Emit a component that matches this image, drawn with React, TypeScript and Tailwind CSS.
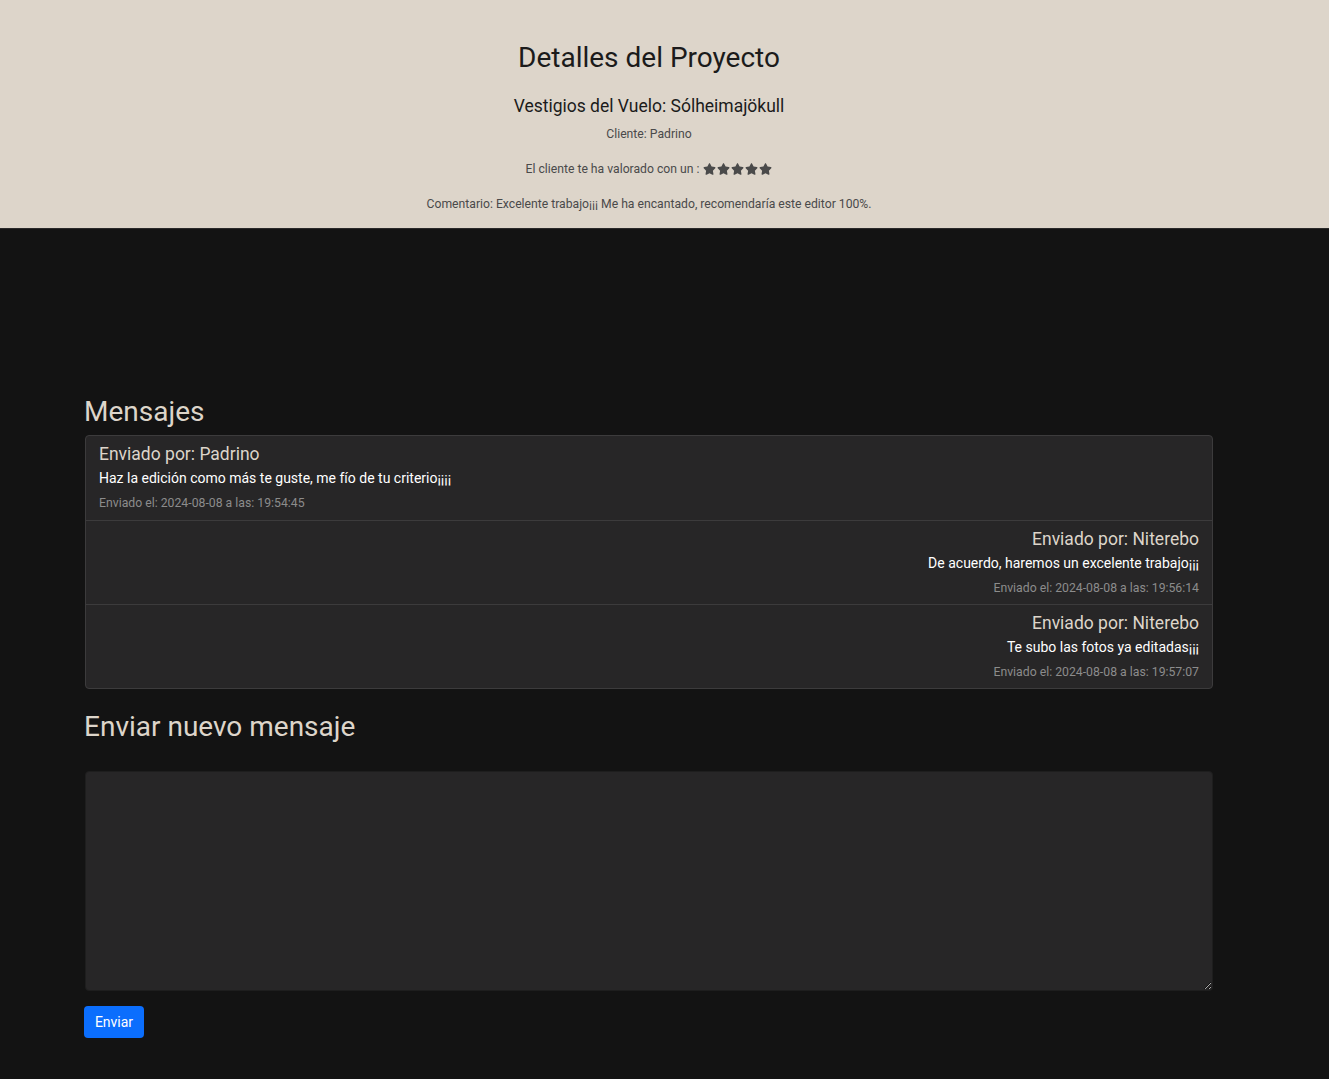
import { useState } from "react";

const messages = [
  {
    from: "Padrino",
    text: "Haz la edición como más te guste, me fío de tu criterio¡¡¡¡",
    date: "2024-08-08",
    time: "19:54:45",
    mine: false,
  },
  {
    from: "Niterebo",
    text: "De acuerdo, haremos un excelente trabajo¡¡¡",
    date: "2024-08-08",
    time: "19:56:14",
    mine: true,
  },
  {
    from: "Niterebo",
    text: "Te subo las fotos ya editadas¡¡¡",
    date: "2024-08-08",
    time: "19:57:07",
    mine: true,
  },
];

function Star() {
  return (
    <svg viewBox="0 0 576 512" className="w-[13px] h-[12px] fill-[#4a4a4a]">
      <path d="M316.9 18C311.6 7 300.4 0 288.1 0s-23.4 7-28.8 18L195 150.3 51.4 171.5c-12 1.8-22 10.2-25.7 21.7s-.7 24.2 7.9 32.7L137.8 329 113.2 474.7c-2 12 3 24.2 12.9 31.3s23 8 33.8 2.3l128.3-68.5 128.3 68.5c10.8 5.7 23.9 4.9 33.8-2.3s14.9-19.3 12.9-31.3L438.5 329 542.7 225.9c8.6-8.5 11.7-21.2 7.9-32.7s-13.7-19.9-25.7-21.7L381.2 150.3 316.9 18z" />
    </svg>
  );
}

export default function App() {
  const [text, setText] = useState("");

  return (
    <div className="min-h-screen bg-[#131313] font-['Roboto',sans-serif]">
      <div className="bg-[#ddd5ca] border-b border-[#2a2a2a] pt-[41px] pb-[15px] text-center pr-[31px]">
        <h1 className="text-[28px] leading-[34px] text-[#1b1b1b]">Detalles del Proyecto</h1>
        <h2 className="mt-[20px] text-[17.5px] leading-[22px] text-[#1b1b1b]">
          Vestigios del Vuelo: Sólheimajökull
        </h2>
        <p className="mt-[8px] text-[12.2px] leading-[18px] text-[#4a4a4a]">Cliente: Padrino</p>
        <p className="mt-[17px] text-[12.2px] leading-[18px] text-[#4a4a4a] flex items-center justify-center gap-[4px]">
          El cliente te ha valorado con un :
          <span className="flex gap-[1px]">
            <Star />
            <Star />
            <Star />
            <Star />
            <Star />
          </span>
        </p>
        <p className="mt-[17px] text-[12.2px] leading-[18px] text-[#4a4a4a]">
          Comentario: Excelente trabajo¡¡¡ Me ha encantado, recomendaría este editor 100%.
        </p>
      </div>

      <div className="ml-[85px] w-[1128px] pt-[166px] pb-[40px]">
        <h3 className="text-[28px] leading-[34px] text-[#ddd5ca] mb-[6px] -ml-px">Mensajes</h3>
        <div className="rounded-[4px] border border-[#3c3b3c] bg-[#272627] overflow-hidden">
          {messages.map((m, i) => (
            <div
              key={i}
              className={
                (i > 0 ? "border-t border-[#3c3b3c] " : "") +
                "px-[13px] pt-[7px] pb-[6px] h-[84px] " +
                (m.mine ? "text-right" : "text-left")
              }
            >
              <div className="text-[17.5px] leading-[22px] text-[#ddd5ca]">Enviado por: {m.from}</div>
              <div className="mt-[3px] text-[14px] leading-[20px] text-white">{m.text}</div>
              <div className="mt-[6px] text-[12.25px] leading-[18px] text-[#8c8c8c]">
                Enviado el: {m.date} a las: {m.time}
              </div>
            </div>
          ))}
        </div>

        <h3 className="mt-[21px] text-[28px] leading-[34px] text-[#ddd5ca] -ml-px">Enviar nuevo mensaje</h3>
        <textarea
          value={text}
          onChange={(e) => setText(e.target.value)}
          className="block mt-[27px] w-full h-[220px] rounded-[4px] border border-[#1e1e1e] bg-[#272627] text-white p-3 outline-none"
        />
        <button className="mt-[15px] h-[32px] w-[60px] -ml-px rounded-[4px] bg-[#0b6efd] text-white text-[14px]">
          Enviar
        </button>
      </div>
    </div>
  );
}
